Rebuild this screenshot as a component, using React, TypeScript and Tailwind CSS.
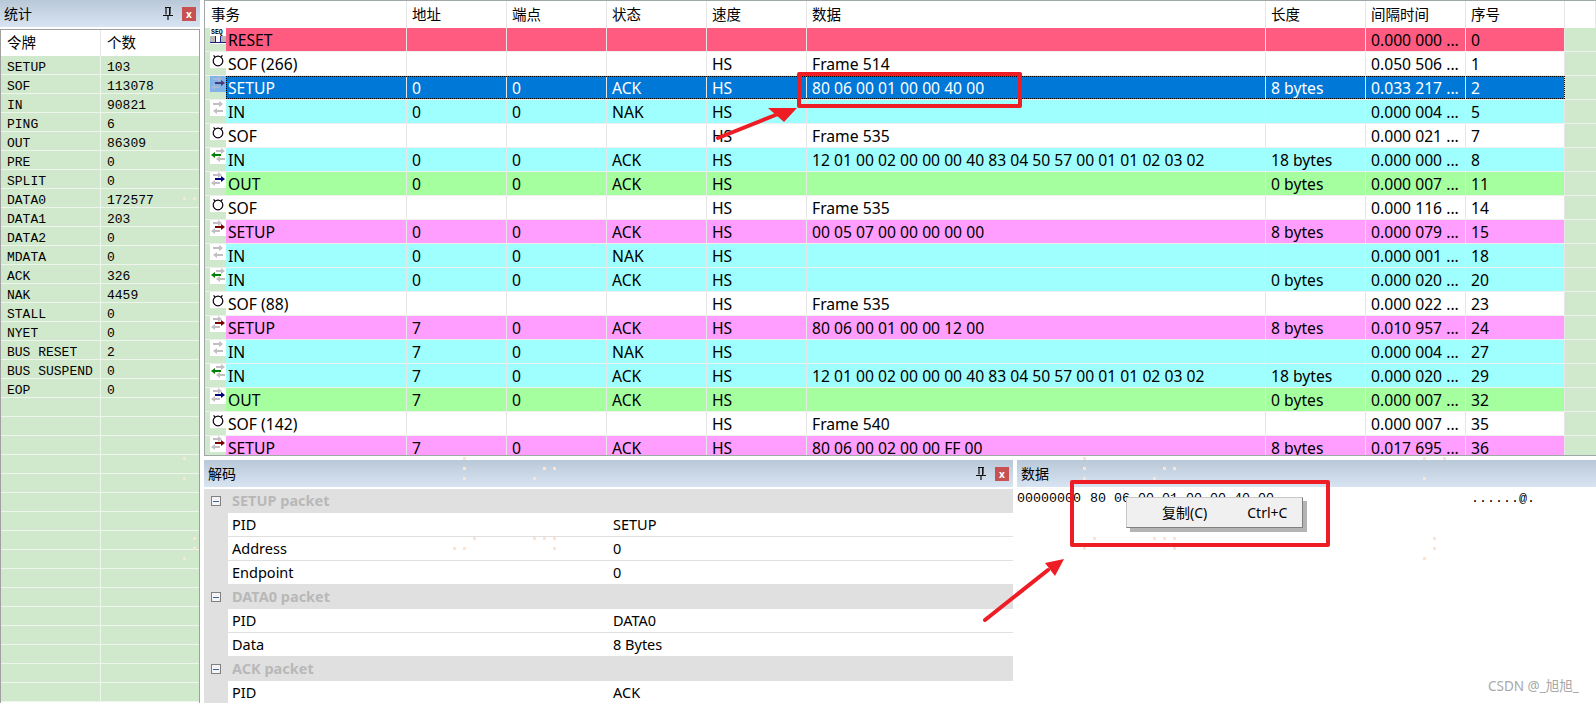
import React from "react";

type Tone = "reset" | "plain" | "sel" | "in" | "out" | "setup";
type Row = { name: string; addr?: string; ep?: string; st?: string; speed?: string; data?: string; len?: string; time: string; no: string; tone: Tone; icon: string };

const full = "12 01 00 02 00 00 00 40 83 04 50 57 00 01 01 02 03 02";

const rows: Row[] = [
  { name: "RESET", time: "0.000 000 ...", no: "0", tone: "reset", icon: "seq" },
  { name: "SOF (266)", speed: "HS", data: "Frame 514", time: "0.050 506 ...", no: "1", tone: "plain", icon: "sof" },
  { name: "SETUP", addr: "0", ep: "0", st: "ACK", speed: "HS", data: "80 06 00 01 00 00 40 00", len: "8 bytes", time: "0.033 217 ...", no: "2", tone: "sel", icon: "sel" },
  { name: "IN", addr: "0", ep: "0", st: "NAK", speed: "HS", time: "0.000 004 ...", no: "5", tone: "in", icon: "nak" },
  { name: "SOF", speed: "HS", data: "Frame 535", time: "0.000 021 ...", no: "7", tone: "plain", icon: "sof" },
  { name: "IN", addr: "0", ep: "0", st: "ACK", speed: "HS", data: full, len: "18 bytes", time: "0.000 000 ...", no: "8", tone: "in", icon: "in" },
  { name: "OUT", addr: "0", ep: "0", st: "ACK", speed: "HS", len: "0 bytes", time: "0.000 007 ...", no: "11", tone: "out", icon: "out" },
  { name: "SOF", speed: "HS", data: "Frame 535", time: "0.000 116 ...", no: "14", tone: "plain", icon: "sof" },
  { name: "SETUP", addr: "0", ep: "0", st: "ACK", speed: "HS", data: "00 05 07 00 00 00 00 00", len: "8 bytes", time: "0.000 079 ...", no: "15", tone: "setup", icon: "setup" },
  { name: "IN", addr: "0", ep: "0", st: "NAK", speed: "HS", time: "0.000 001 ...", no: "18", tone: "in", icon: "nak" },
  { name: "IN", addr: "0", ep: "0", st: "ACK", speed: "HS", len: "0 bytes", time: "0.000 020 ...", no: "20", tone: "in", icon: "in" },
  { name: "SOF (88)", speed: "HS", data: "Frame 535", time: "0.000 022 ...", no: "23", tone: "plain", icon: "sof" },
  { name: "SETUP", addr: "7", ep: "0", st: "ACK", speed: "HS", data: "80 06 00 01 00 00 12 00", len: "8 bytes", time: "0.010 957 ...", no: "24", tone: "setup", icon: "setup" },
  { name: "IN", addr: "7", ep: "0", st: "NAK", speed: "HS", time: "0.000 004 ...", no: "27", tone: "in", icon: "nak" },
  { name: "IN", addr: "7", ep: "0", st: "ACK", speed: "HS", data: full, len: "18 bytes", time: "0.000 020 ...", no: "29", tone: "in", icon: "in" },
  { name: "OUT", addr: "7", ep: "0", st: "ACK", speed: "HS", len: "0 bytes", time: "0.000 007 ...", no: "32", tone: "out", icon: "out" },
  { name: "SOF (142)", speed: "HS", data: "Frame 540", time: "0.000 007 ...", no: "35", tone: "plain", icon: "sof" },
  { name: "SETUP", addr: "7", ep: "0", st: "ACK", speed: "HS", data: "80 06 00 02 00 00 FF 00", len: "8 bytes", time: "0.017 695 ...", no: "36", tone: "setup", icon: "setup" },
];

const toneClass: Record<Tone, string> = {
  reset: "bg-[#ff5a80] text-black",
  plain: "bg-white text-black",
  sel: "bg-[#0078d7] text-white outline-1 outline-dotted outline-black -outline-offset-1",
  in: "bg-[#9fffff] text-black",
  out: "bg-[#a6ff9f] text-black",
  setup: "bg-[#ff9eff] text-black",
};

const stats = [
  ["SETUP", "103"], ["SOF", "113078"], ["IN", "90821"], ["PING", "6"], ["OUT", "86309"], ["PRE", "0"], ["SPLIT", "0"],
  ["DATA0", "172577"], ["DATA1", "203"], ["DATA2", "0"], ["MDATA", "0"], ["ACK", "326"], ["NAK", "4459"], ["STALL", "0"],
  ["NYET", "0"], ["BUS RESET", "2"], ["BUS SUSPEND", "0"], ["EOP", "0"],
  ["", ""], ["", ""], ["", ""], ["", ""], ["", ""], ["", ""], ["", ""], ["", ""], ["", ""], ["", ""], ["", ""], ["", ""], ["", ""], ["", ""], ["", ""], ["", ""],
];

const decode: { group?: string; k?: string; v?: string }[] = [
  { group: "SETUP packet" },
  { k: "PID", v: "SETUP" },
  { k: "Address", v: "0" },
  { k: "Endpoint", v: "0" },
  { group: "DATA0 packet" },
  { k: "PID", v: "DATA0" },
  { k: "Data", v: "8 Bytes" },
  { group: "ACK packet" },
  { k: "PID", v: "ACK" },
];

const hexBytes = ["80", "06", "00", "01", "00", "00", "40", "00"];

// faint orange dots left over in the screenshot
const specks = [
  [183, 197], [193, 197], [183, 457], [183, 477], [193, 537], [193, 547], [183, 557],
  [463, 457], [463, 467], [463, 477], [543, 467], [553, 467], [533, 477],
  [473, 537], [533, 537], [543, 537], [553, 537], [453, 547], [463, 547], [553, 547],
  [1083, 457], [1083, 467], [1083, 477], [1163, 467], [1173, 467], [1153, 477],
  [1093, 537], [1153, 537], [1163, 537], [1173, 537], [1083, 547], [1173, 547],
  [1423, 457], [1443, 457], [1423, 477], [1433, 537], [1433, 547], [1423, 557],
];

function Arrow({ x, y, len, dir, color }: { x: number; y: number; len: number; dir: "l" | "r"; color: string }) {
  // x is the left end, y the centre line
  return dir === "r" ? (
    <path d={`M${x} ${y - 1}h${len - 4}v-2l4 3-4 3v-2h-${len - 4}z`} fill={color} />
  ) : (
    <path d={`M${x + len} ${y - 1}h-${len - 4}v-2l-4 3 4 3v-2h${len - 4}z`} fill={color} />
  );
}

function RowIcon({ kind }: { kind: string }) {
  if (kind === "seq") {
    return (
      <svg width="16" height="16" viewBox="0 0 16 16" className="bg-white">
        <text x="1" y="5.5" fontSize="6.5" fontWeight="700" fontFamily="Liberation Mono, monospace" fill="#000">SEQ</text>
        <path d="M0 8h5v6H0zM11 8h5v6h-5z" fill="#b8b8b8" />
        <path d="M0 14.5h16M5.5 8v6M10.5 8v6" fill="none" stroke="#1a237e" strokeWidth="1" />
      </svg>
    );
  }
  if (kind === "sof") {
    return (
      <svg width="16" height="16" viewBox="0 0 16 16" className="bg-white">
        <circle cx="8" cy="9" r="4.8" fill="none" stroke="#000" strokeWidth="1.2" />
        <path d="M3.5 3.5l1.5 1.2M12.5 3.5l-1.5 1.2" stroke="#000" strokeWidth="1.1" />
      </svg>
    );
  }
  if (kind === "nak") {
    return (
      <svg width="16" height="16" viewBox="0 0 16 16" className="bg-white">
        <Arrow x={3} y={4} len={10} dir="r" color="#c0c0c0" />
        <Arrow x={3} y={11} len={10} dir="l" color="#c0c0c0" />
      </svg>
    );
  }
  if (kind === "in") {
    return (
      <svg width="16" height="16" viewBox="0 0 16 16" className="bg-white">
        <Arrow x={6} y={3} len={9} dir="r" color="#c0c0c0" />
        <Arrow x={6} y={11} len={9} dir="l" color="#c0c0c0" />
        <Arrow x={1} y={7} len={10} dir="l" color="#008000" />
      </svg>
    );
  }
  const color = kind === "out" ? "#000080" : kind === "sel" ? "#4a3a78" : "#800000";
  const gray = kind === "sel" ? "#a8b8d8" : "#c0c0c0";
  return (
    <svg width="16" height="16" viewBox="0 0 16 16" className={kind === "sel" ? "bg-[#80b4e8]" : "bg-white"}>
      <Arrow x={3} y={3} len={9} dir="r" color={gray} />
      <Arrow x={1} y={11} len={9} dir="l" color={gray} />
      <Arrow x={5} y={7} len={10} dir="r" color={color} />
    </svg>
  );
}

function PinClose() {
  return (
    <div className="flex items-center gap-[8px]">
      <svg width="12" height="13" viewBox="0 0 12 13">
        <path d="M3 .5h6M4 1v6.5M8 1v6.5M1 8.5h10M6 9v4" stroke="#111" strokeWidth="1.2" fill="none" />
        <path d="M7 1h1v7H7z" fill="#111" />
      </svg>
      <div className="flex h-[14px] w-[14px] items-center justify-center bg-[#c75050] text-[10px] font-bold leading-none text-white">x</div>
    </div>
  );
}

function TitleBar({ title, tools }: { title: string; tools?: boolean }) {
  return (
    <div className="flex h-[27px] shrink-0 items-center justify-between bg-gradient-to-b from-[#b9c8d8] to-[#d8e4f2] px-[4px] text-[14px] text-black">
      <span>{title}</span>
      {tools && <PinClose />}
    </div>
  );
}

const cols = "grid grid-cols-[181px_100px_100px_100px_100px_459px_100px_100px_99px]";
const headerCols = "grid grid-cols-[202px_100px_100px_100px_100px_459px_100px_100px_99px_1fr]";
const cell = "min-w-0 whitespace-nowrap overflow-hidden border-r border-[#e6e6e6] px-[5px] leading-[25px]";

export default function App() {
  return (
    <div className="relative flex h-[703px] w-[1596px] overflow-hidden bg-white font-['Noto_Sans','Noto_Sans_CJK_SC',sans-serif] text-black">
      <aside className="flex w-[200px] shrink-0 flex-col">
        <TitleBar title="统计" tools />
        <div className="mt-[2px] min-h-0 flex-1 overflow-hidden border-x border-t border-[#a0a0a0]">
          <div className="grid h-[26px] grid-cols-[100px_1fr] text-[14.5px] leading-[25px]">
            <div className="border-r border-[#e6e6e6] pl-[6px]">令牌</div>
            <div className="pl-[6px]">个数</div>
          </div>
          {stats.map((s, i) => (
            <div key={i} className="grid h-[19px] grid-cols-[100px_1fr] border-b border-[#eef5ec] bg-[#d0e8cc] font-['Liberation_Mono',monospace] text-[13px] leading-[23px]">
              <div className="whitespace-nowrap border-r border-[#eef5ec] pl-[6px]">{s[0]}</div>
              <div className="pl-[6px]">{s[1]}</div>
            </div>
          ))}
        </div>
      </aside>

      <div className="ml-[4px] flex min-w-0 flex-1 flex-col">
        <section className="h-[456px] shrink-0 overflow-hidden border-b border-l border-t border-[#a0a8a8] text-[15.7px]">
          <div className={`${headerCols} h-[27px] bg-white text-[14.5px] leading-[26px]`}>
            {["事务", "地址", "端点", "状态", "速度", "数据", "长度", "间隔时间", "序号", ""].map((h, i) => (
              <div key={i} className="border-r border-[#e6e6e6] px-[5px] first:px-[6px]">{h}</div>
            ))}
          </div>
          {rows.map((r, i) => (
            <div key={i} className="flex h-6 border-b border-[#eef0ee] bg-[#d0e8cc]">
              <div className="flex w-[21px] shrink-0 justify-end bg-[#d0e8cc]">
                <div className="h-4"><RowIcon kind={r.icon} /></div>
              </div>
              <div className={`${cols} ${toneClass[r.tone]}`}>
                <div className={`${cell} pl-[2px]`}>{r.name}</div>
                <div className={cell}>{r.addr}</div>
                <div className={cell}>{r.ep}</div>
                <div className={cell}>{r.st}</div>
                <div className={cell}>{r.speed}</div>
                <div className={cell}>{r.data}</div>
                <div className={cell}>{r.len}</div>
                <div className={cell}>{r.time}</div>
                <div className={cell}>{r.no}</div>
              </div>
            </div>
          ))}
        </section>

        <div className="mt-[4px] flex min-h-0 flex-1">
          <section className="flex w-[809px] shrink-0 flex-col">
            <TitleBar title="解码" tools />
            <div className="min-h-0 flex-1 overflow-hidden pt-[2px] text-[14.5px]">
              {decode.map((d, i) =>
                d.group ? (
                  <div key={i} className="flex h-6 items-center bg-[#e0e0e0]">
                    <div className="ml-[7px] flex h-[10px] w-[10px] items-center justify-center border border-[#808080] bg-[#f4f4f4]">
                      <div className="h-px w-[6px] bg-[#3f5fa0]" />
                    </div>
                    <span className="ml-[11px] font-bold text-[#b8b8b8]">{d.group}</span>
                  </div>
                ) : (
                  <div key={i} className="flex h-6">
                    <div className="w-6 shrink-0 bg-[#e0e0e0]" />
                    <div className="flex flex-1 border-b border-[#e0e0e0]">
                      <div className="w-[355px] shrink-0 pl-[4px] leading-[22px]">{d.k}</div>
                      <div className="pl-[30px] leading-[22px]">{d.v}</div>
                    </div>
                  </div>
                )
              )}
            </div>
          </section>
          <section className="ml-[4px] flex min-w-0 flex-1 flex-col">
            <TitleBar title="数据" />
            <div className="flex pt-[1px] font-['Liberation_Mono',monospace] text-[13.33px] leading-[22px]">
              <span>00000000</span>
              <div className="ml-[9px] flex gap-[8px]">
                {hexBytes.map((b, i) => (
                  <span key={i}>{b}</span>
                ))}
              </div>
              <span className="ml-[197px]">......@.</span>
            </div>
          </section>
        </div>
      </div>

      {specks.map(([x, y], i) => (
        <span key={i} className="absolute h-[3px] w-[3px] bg-[#fde4d2]" style={{ left: x, top: y }} />
      ))}

      <div className="absolute left-[1126px] top-[497px] flex h-[31px] w-[177px] items-center border border-b-[#808080] border-l-[#c8c8c8] border-r-[#808080] border-t-[#c8c8c8] bg-[#f0f0f0] text-[14px] shadow-[4px_4px_0_#b4b4b4]">
        <span className="ml-[35px]">复制(C)</span>
        <span className="ml-[40px]">Ctrl+C</span>
      </div>

      <div className="absolute left-[797px] top-[72px] h-[36px] w-[225px] rounded-[2px] border-4 border-[#ee1c25]" />
      <div className="absolute left-[1070px] top-[480px] h-[67px] w-[260px] rounded-[2px] border-4 border-[#ee1c25]" />

      <svg className="absolute left-0 top-0" width="1596" height="703" fill="none">
        <path d="M718 138L778 114" stroke="#ee1c25" strokeWidth="4" strokeLinecap="round" />
        <path d="M797 108L768 108L784 122z" fill="#ee1c25" />
        <path d="M985 620L1048 570" stroke="#ee1c25" strokeWidth="4" strokeLinecap="round" />
        <path d="M1064 559L1045 563L1055 576z" fill="#ee1c25" />
      </svg>

      <div className="absolute left-[1488px] top-[680px] text-[13.5px] leading-none text-[#a8a8a8]">CSDN @_旭旭_</div>
    </div>
  );
}
